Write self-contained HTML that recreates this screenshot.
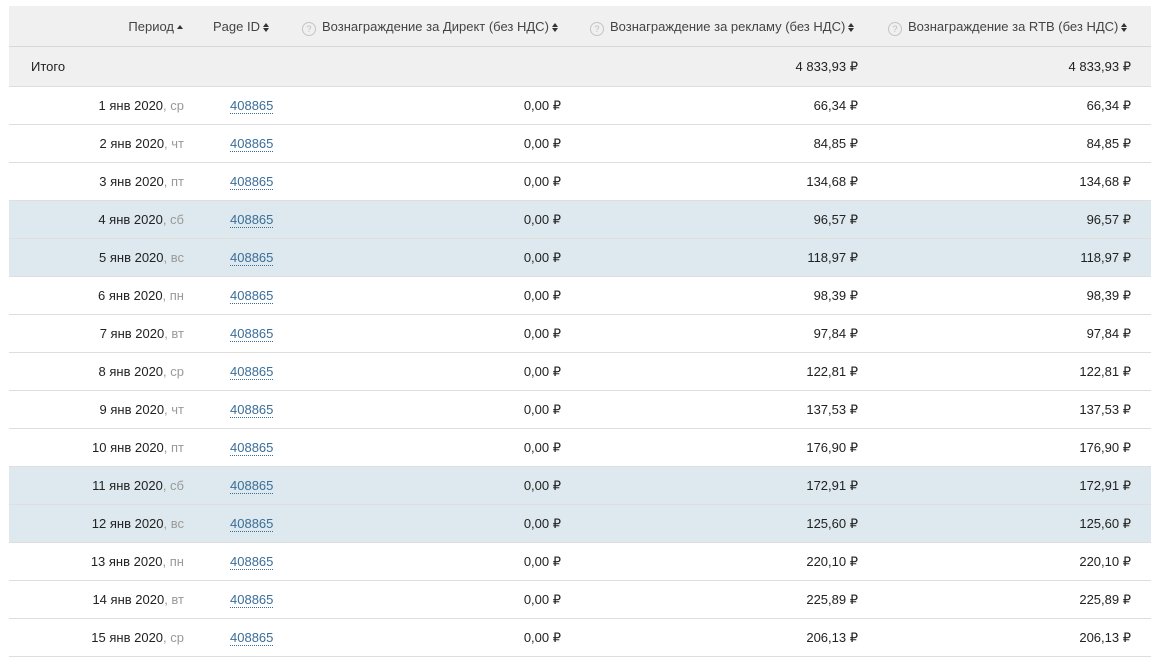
<!DOCTYPE html>
<html><head><meta charset="utf-8"><style>
*{margin:0;padding:0;box-sizing:border-box}
body{width:1165px;height:659px;background:#fff;font-family:"Liberation Sans",Arial,sans-serif;font-size:13px;color:#222;position:relative;overflow:hidden}
.row{position:absolute;left:9px;width:1142px;height:38px;border-bottom:1px solid #dedede}
.row span,.hd span{position:absolute;top:0;line-height:38px;white-space:nowrap}
.hd{position:absolute;left:9px;top:6px;width:1142px;height:41px;background:#f0f0f0;border-bottom:1px solid #d8d8d8;color:#444}
.hd span{line-height:41px}
.tot{background:#f0f0f0}
.we{background:#dde9ee}
.d{color:#999}
a{color:#3b6e99;text-decoration:none;border-bottom:1px dotted #3b6e99;line-height:14px}
.q{display:inline-block;width:14px;height:14px;border:1px solid #c4c4c4;border-radius:50%;font-size:9px;line-height:12px;text-align:center;color:#bbb;vertical-align:-1px;margin-right:6px;font-style:normal}
.s{display:inline-block;width:7px;height:9px;position:relative;vertical-align:-1px;margin-left:3px}
.s:before{content:"";position:absolute;left:0;top:0;border-left:3.5px solid transparent;border-right:3.5px solid transparent;border-bottom:4px solid #333}
.s:after{content:"";position:absolute;left:0;top:5px;border-left:3.5px solid transparent;border-right:3.5px solid transparent;border-top:4px solid #333}
.up:after{display:none}
.up:before{top:2px}
</style></head><body>
<div class="hd">
<span style="right:967px">Период<i class="s up"></i></span>
<span style="left:204px">Page ID<i class="s"></i></span>
<span style="left:293px"><i class="q">?</i>Вознаграждение за Директ (без НДС)<i class="s"></i></span>
<span style="left:581px"><i class="q">?</i>Вознаграждение за рекламу (без НДС)<i class="s"></i></span>
<span style="left:879px"><i class="q">?</i>Вознаграждение за RTB (без НДС)<i class="s"></i></span>
</div>
<div class="row tot" style="top:47px;height:40px"><span style="left:22px;line-height:39px">Итого</span><span style="right:293px;line-height:39px">4 833,93 ₽</span><span style="right:20px;line-height:39px">4 833,93 ₽</span></div>
<div id="rows"></div>
<script>
var d=[["1","ср","66,34"],["2","чт","84,85"],["3","пт","134,68"],["4","сб","96,57",1],["5","вс","118,97",1],["6","пн","98,39"],["7","вт","97,84"],["8","ср","122,81"],["9","чт","137,53"],["10","пт","176,90"],["11","сб","172,91",1],["12","вс","125,60",1],["13","пн","220,10"],["14","вт","225,89"],["15","ср","206,13"]];
var h="";d.forEach(function(r,i){h+='<div class="row'+(r[3]?' we':'')+'" style="top:'+(87+i*38)+'px"><span style="right:967px">'+r[0]+' янв 2020<span class="d" style="position:static">, '+r[1]+'</span></span><span style="left:221px"><a>408865</a></span><span style="right:590px">0,00 ₽</span><span style="right:293px">'+r[2]+' ₽</span><span style="right:20px">'+r[2]+' ₽</span></div>';});
document.getElementById("rows").outerHTML=h;
</script>
</body></html>
